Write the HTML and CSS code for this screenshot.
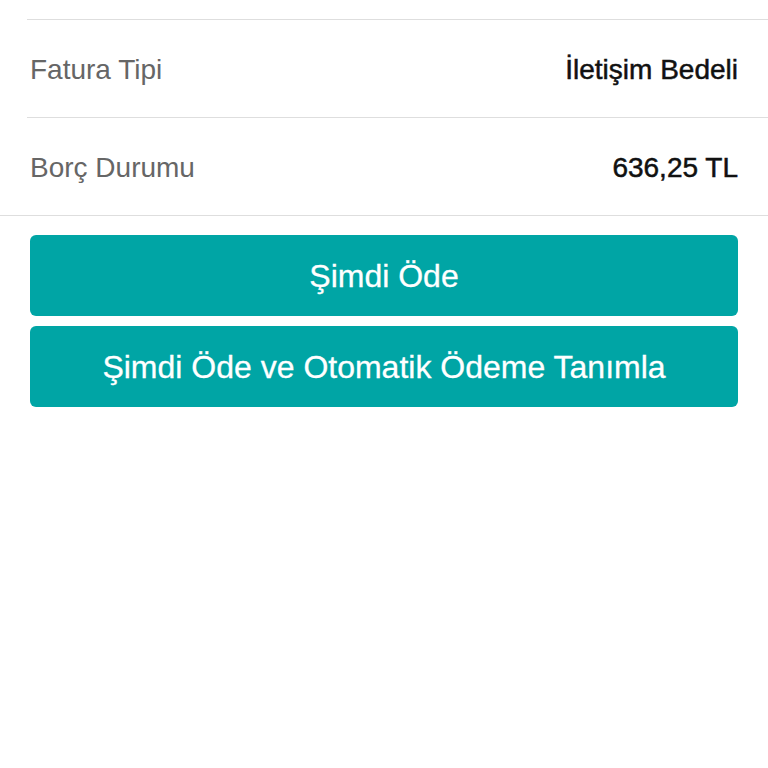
FILE: index.html
```html
<!DOCTYPE html>
<html lang="tr">
<head>
    <meta charset="UTF-8">
    <meta name="viewport" content="width=device-width, initial-scale=1.0">
    <title>Fatura Detayı</title>
    <link rel="stylesheet" href="styles.css">
</head>
<body>
    <div class="list">
        <div class="row">
            <span class="label">Fatura Tipi</span>
            <span class="value">İletişim Bedeli</span>
        </div>
        <div class="row">
            <span class="label">Borç Durumu</span>
            <span class="value">636,25 TL</span>
        </div>
    </div>

    <div class="actions">
        <button class="pay">Şimdi Öde</button>
        <button class="pay">Şimdi Öde ve Otomatik Ödeme Tanımla</button>
    </div>
</body>
</html>
```

FILE: styles.css
```css
body {
    margin: 0;
    background-color: #fff;
    font-family: "Liberation Sans", Arial, sans-serif;
}
.list {
    padding-top: 19px;
    border-bottom: 1px solid #dedede;
}
.row {
    display: flex;
    justify-content: space-between;
    align-items: center;
    height: 98px;
    margin-left: 27px;
    padding: 3px 30px 0 3px;
    box-sizing: border-box;
    border-top: 1px solid #dedede;
}
.label {
    font-size: 28px;
    color: #666;
}
.value {
    font-size: 28px;
    color: #111;
    -webkit-text-stroke: 0.5px #111;
}
.actions {
    display: flex;
    flex-direction: column;
    gap: 10px;
    margin: 19px 30px 0;
}
.pay {
    height: 81px;
    padding-top: 3px;
    border: none;
    border-radius: 6px;
    background-color: #00a5a5;
    color: #fff;
    font-family: inherit;
    font-size: 32px;
    -webkit-text-stroke: 0.3px #fff;
    cursor: pointer;
}
```
